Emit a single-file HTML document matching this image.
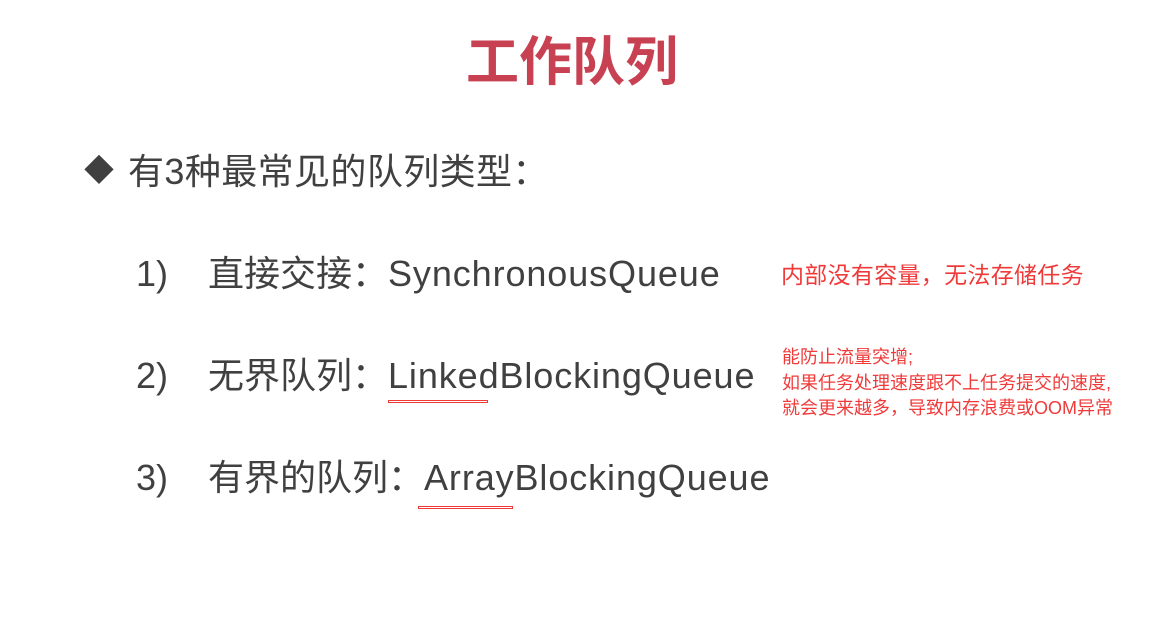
<!DOCTYPE html>
<html><head><meta charset="utf-8"><style>
body{margin:0;width:1163px;height:629px;background:#fff;position:relative;overflow:hidden;font-family:"Liberation Sans","Noto Sans CJK SC",sans-serif;color:#404040}
.a{position:absolute;white-space:nowrap}
.t{left:466px;top:30px;font-size:53px;font-weight:bold;color:#c84152;line-height:66px}
.b{font-size:36px;line-height:44px}
.l{letter-spacing:0.9px}
.r{color:#f03a3a}
.u{position:absolute;border:1.5px solid #f03a3a;height:1px;box-sizing:content-box}
</style></head><body>
<div class="a t">工作队列</div>
<div class="a" style="left:84px;top:150px;font-size:30px;line-height:44px">◆</div>
<div class="a b" style="left:128px;top:150px;letter-spacing:0.4px">有3种最常见的队列类型：</div>
<div class="a b" style="left:136px;top:252px">1)</div>
<div class="a b" style="left:208px;top:252px">直接交接：<span class="l">SynchronousQueue</span></div>
<div class="a b" style="left:136px;top:354px">2)</div>
<div class="a b" style="left:208px;top:354px">无界队列：<span class="l">LinkedBlockingQueue</span></div>
<div class="a b" style="left:136px;top:456px">3)</div>
<div class="a b" style="left:208px;top:456px">有界的队列：<span class="l">ArrayBlockingQueue</span></div>
<div class="u" style="left:388px;top:400px;width:98px"></div>
<div class="u" style="left:418px;top:506px;width:93px"></div>
<div class="a r" style="left:781px;top:260px;font-size:23px;line-height:30px;letter-spacing:0.3px">内部没有容量，无法存储任务</div>
<div class="a r" style="left:782px;top:345px;font-size:18px;line-height:25.5px">能防止流量突增;<br>如果任务处理速度跟不上任务提交的速度,<br>就会更来越多，导致内存浪费或OOM异常</div>
</body></html>
